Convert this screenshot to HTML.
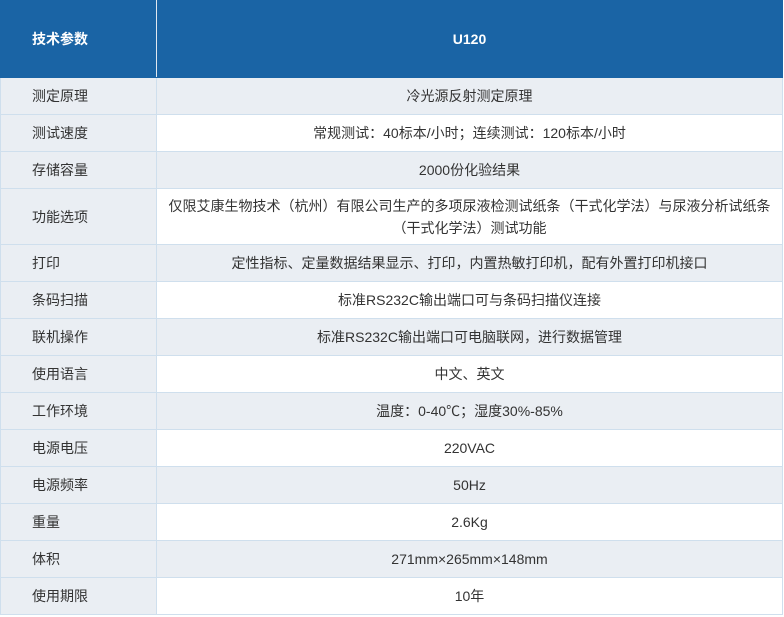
<!DOCTYPE html>
<html><head><meta charset="utf-8"><style>
body{margin:0;background:#fff;font-family:"Liberation Sans","Noto Sans CJK SC",sans-serif;font-size:14px;color:#333}
table{position:absolute;left:0;top:0;width:783px;border-collapse:collapse;table-layout:fixed}
td{border:1px solid #cfdfed;text-align:center;padding:0;line-height:22px}
td:first-child{width:124px;text-align:left;padding-left:31px;background:#eaeef3}
tr.h td{background:#1a64a5;color:#fff;font-weight:bold;height:76px;border-color:#1a64a5;border-right-color:#e0e8f0}
tr.h td:last-child{border-right-color:#1a64a5}
tr.g td{background:#eaeef3}
tr td{height:36px}
</style></head><body>
<table>
<tr class="h"><td>技术参数</td><td>U120</td></tr>
<tr class="g"><td>测定原理</td><td>冷光源反射测定原理</td></tr>
<tr><td>测试速度</td><td>常规测试：40标本/小时；连续测试：120标本/小时</td></tr>
<tr class="g"><td>存储容量</td><td>2000份化验结果</td></tr>
<tr><td style="height:55px">功能选项</td><td>仅限艾康生物技术（杭州）有限公司生产的多项尿液检测试纸条（干式化学法）与尿液分析试纸条<br>（干式化学法）测试功能</td></tr>
<tr class="g"><td>打印</td><td>定性指标、定量数据结果显示、打印，内置热敏打印机，配有外置打印机接口</td></tr>
<tr><td>条码扫描</td><td>标准RS232C输出端口可与条码扫描仪连接</td></tr>
<tr class="g"><td>联机操作</td><td>标准RS232C输出端口可电脑联网，进行数据管理</td></tr>
<tr><td>使用语言</td><td>中文、英文</td></tr>
<tr class="g"><td>工作环境</td><td>温度：0-40℃；湿度30%-85%</td></tr>
<tr><td>电源电压</td><td>220VAC</td></tr>
<tr class="g"><td>电源频率</td><td>50Hz</td></tr>
<tr><td>重量</td><td>2.6Kg</td></tr>
<tr class="g"><td>体积</td><td>271mm×265mm×148mm</td></tr>
<tr><td>使用期限</td><td>10年</td></tr>
</table>
</body></html>
